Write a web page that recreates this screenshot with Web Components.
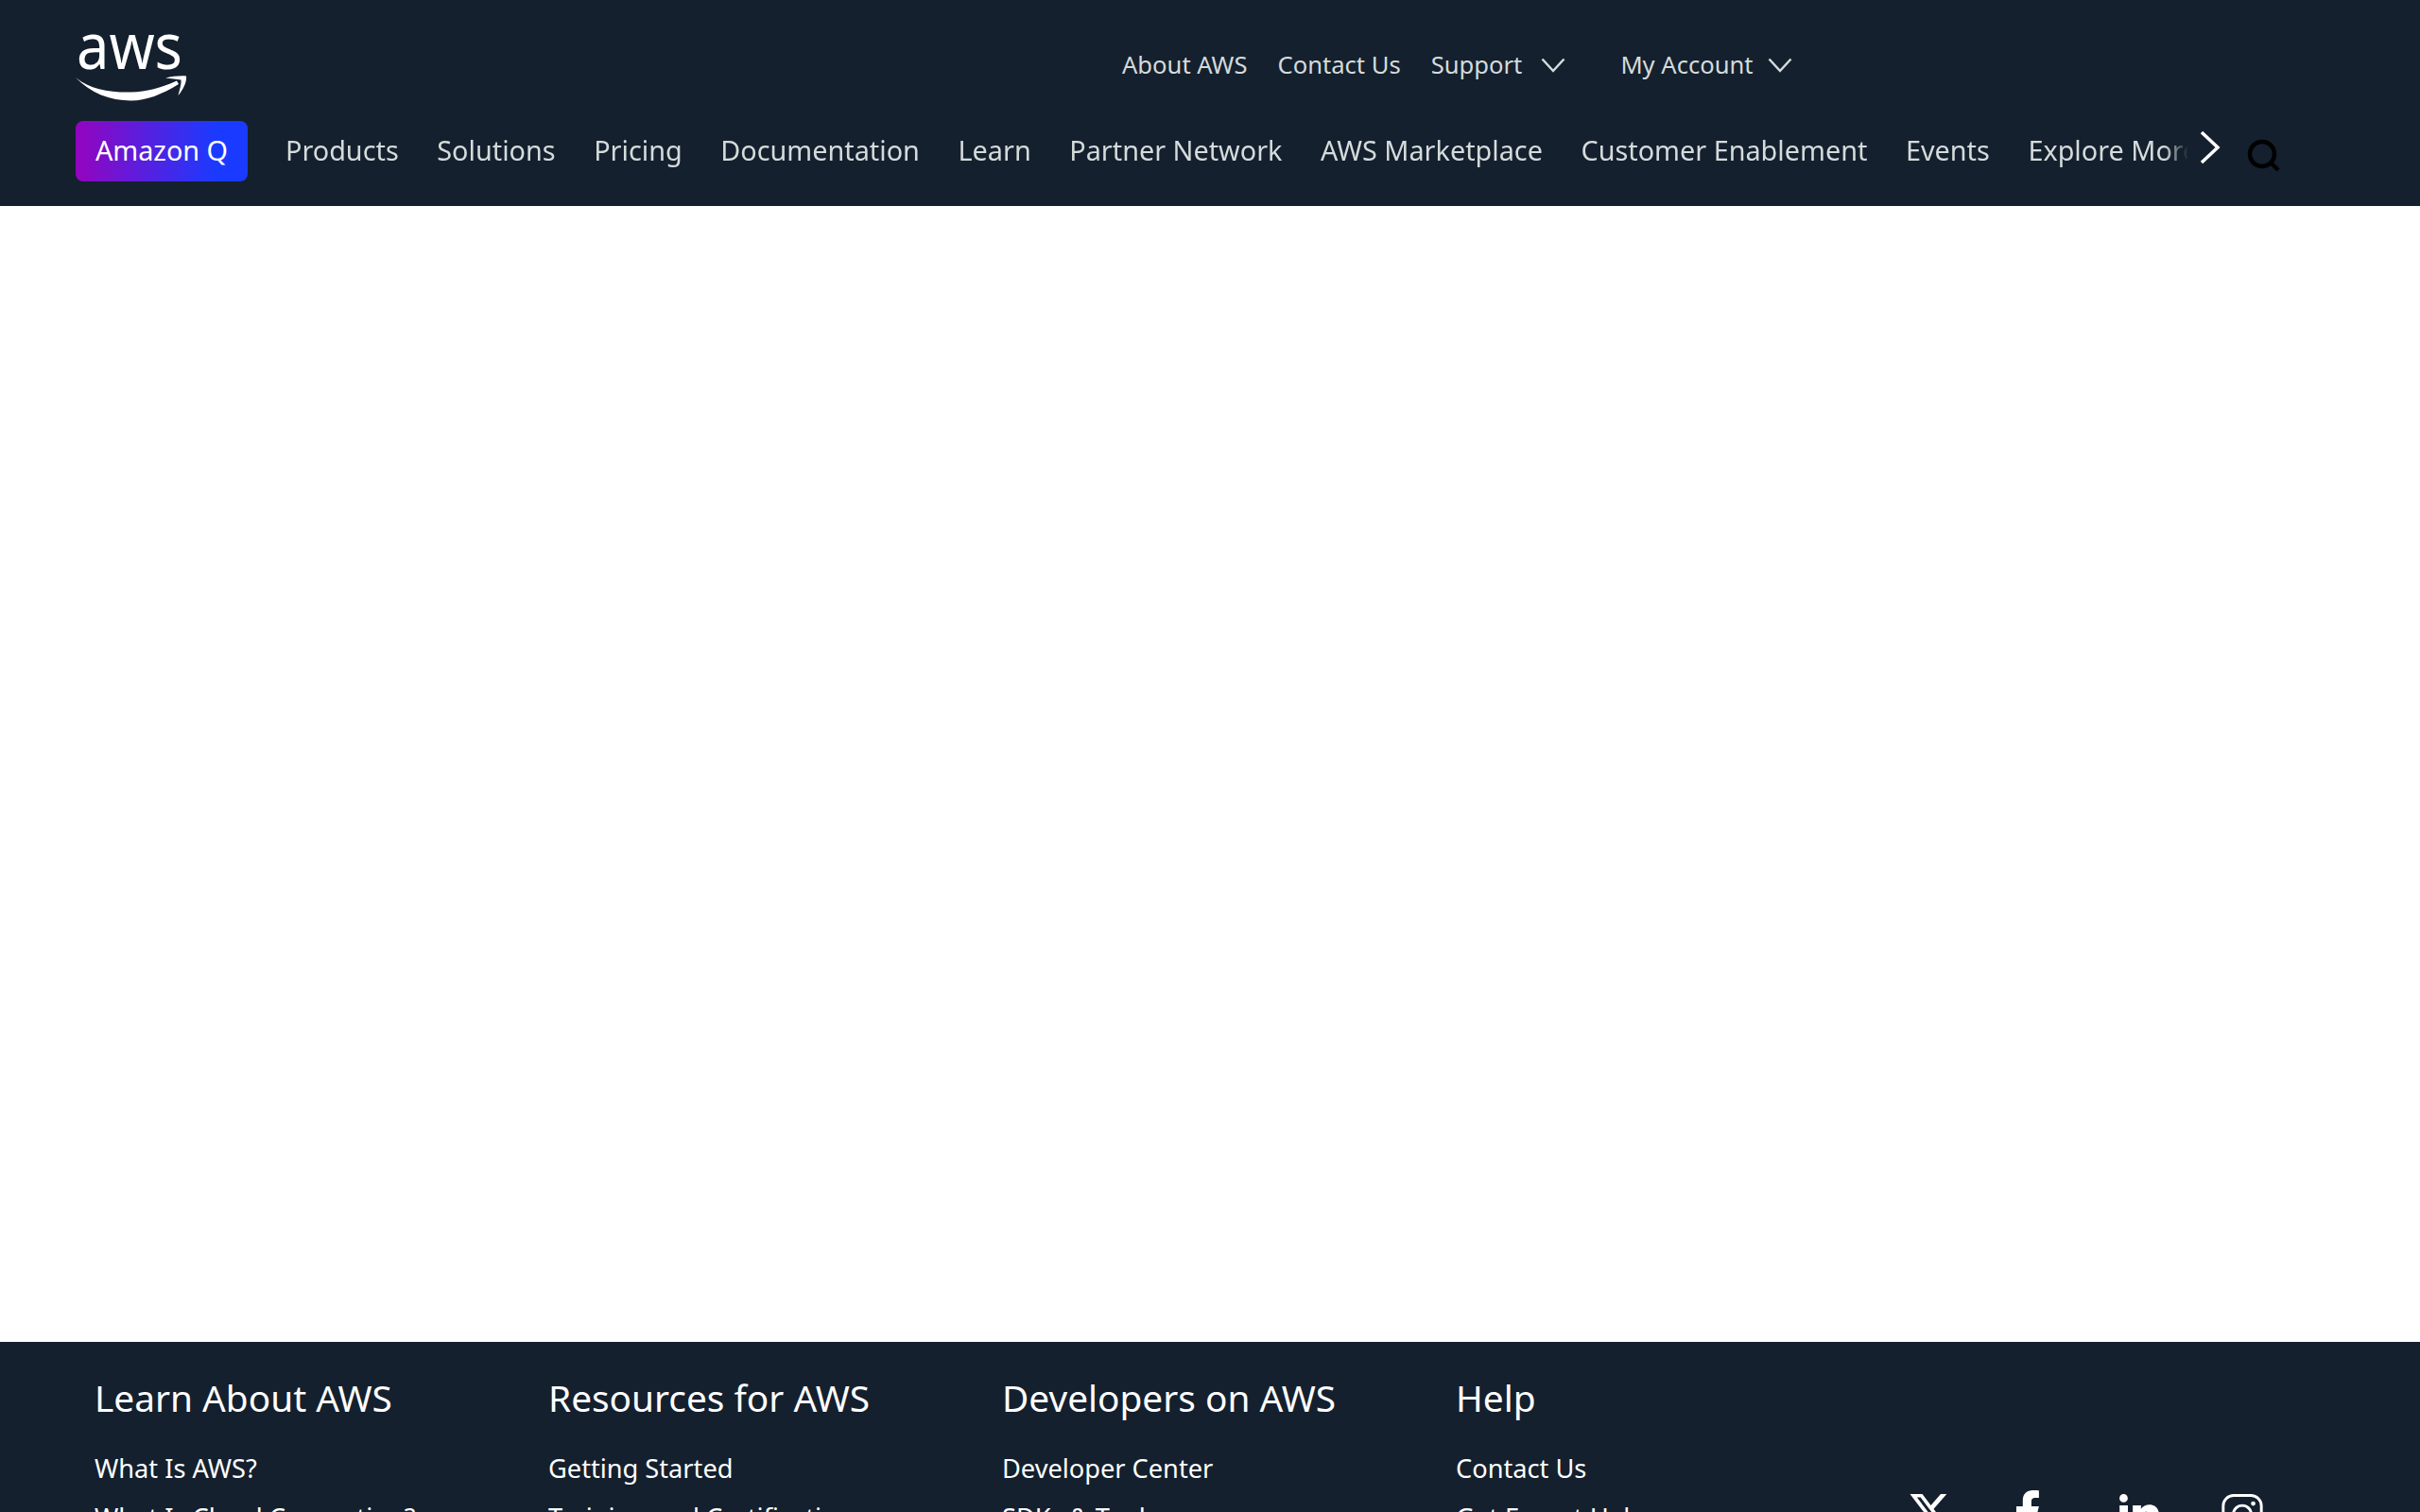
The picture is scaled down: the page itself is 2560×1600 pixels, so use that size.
<!DOCTYPE html>
<html lang="en">
<head>
<meta charset="utf-8">
<title>AWS</title>
<style>
    html, body { margin: 0; height: 100%; overflow: hidden; background: #fff; }
    body { font-family: "Noto Sans", "Liberation Sans", sans-serif; }
</style>
</head>
<body>
<aws-page>
    <aws-header slot="header"></aws-header>
    <aws-footer slot="footer">
        <footer-column heading="Learn About AWS">
            <a>What Is AWS?</a><a>What Is Cloud Computing?</a><a>What Is DevOps?</a>
        </footer-column>
        <footer-column heading="Resources for AWS">
            <a>Getting Started</a><a>Training and Certification</a><a>AWS Trust Center</a>
        </footer-column>
        <footer-column heading="Developers on AWS">
            <a>Developer Center</a><a>SDKs &amp; Tools</a><a>.NET on AWS</a>
        </footer-column>
        <footer-column heading="Help">
            <a>Contact Us</a><a>Get Expert Help</a><a>File a Support Ticket</a>
        </footer-column>
        <social-links></social-links>
    </aws-footer>
</aws-page>

<script>
const INK = '#14202e';

class AwsPage extends HTMLElement {
    constructor() {
        super();
        this.attachShadow({ mode: 'open' });
        this.shadowRoot.innerHTML = `
        <style>
            :host { display: flex; flex-direction: column; width: 2560px; }
            main { height: 1202px; background: #fff; }
        </style>
        <slot name="header"></slot>
        <main></main>
        <slot name="footer"></slot>
        `;
    }
}

class AwsLogo extends HTMLElement {
    constructor() {
        super();
        this.attachShadow({ mode: 'open' });
        this.shadowRoot.innerHTML = `
        <style>
            :host { display: block; width: 118px; height: 72px; }
            svg { display: block; }
            text { font-family: "Noto Sans", sans-serif; font-size: 68px; fill: #fff; }
        </style>
        <svg width="118" height="72" viewBox="0 0 118 72">
            <text x="1" y="37" textLength="112" lengthAdjust="spacingAndGlyphs">aws</text>
            <path fill="#fff" d="M0 46C16 59 36 62 59 61.500C75 61 90 57 107 49.500L109 53C91 64 75 70.500 58.500 70.500C36 70.500 16 62.500 0 46Z"/>
            <path fill="#fff" d="M95 46.500C102 45 110 44 117 44.500C118 51 113 60 108.500 65C110 59 112 53 111.500 48.500C107 47.500 101 47.500 95 46.500Z"/>
        </svg>
        `;
    }
}

class AwsHeader extends HTMLElement {
    constructor() {
        super();
        this.attachShadow({ mode: 'open' });
        const chevron = `<svg class="chev" width="26" height="16" viewBox="0 0 26 16"><path d="M1.500 1.500L13 14L24.500 1.500" fill="none" stroke="#d5dbdb" stroke-width="2.500"/></svg>`;
        const links = ['Products', 'Solutions', 'Pricing', 'Documentation', 'Learn', 'Partner Network',
            'AWS Marketplace', 'Customer Enablement', 'Events', 'Explore More', 'Customer Stories'];
        this.shadowRoot.innerHTML = `
        <style>
            :host {
                display: block;
                height: 218px;
                box-sizing: border-box;
                padding: 36px 0 0 80px;
                background: ${INK};
                color: #d5dbdb;
                font-family: "Noto Sans", "Liberation Sans", sans-serif;
            }
            .top { display: flex; align-items: flex-start; height: 92px; }
            .util {
                display: flex;
                align-items: center;
                margin-left: 989px;
                height: 64px;
                font-size: 25.600px;
                white-space: nowrap;
            }
            .util a { margin-right: 32px; }
            .util a:nth-of-type(4) { margin-right: 27px; }
            .chev { margin-right: 58px; margin-left: -12px; margin-top: 2px; }
            .bar { display: flex; align-items: center; height: 64px; width: 2340px; }
            .q {
                flex: none;
                width: 182px;
                height: 64px;
                line-height: 62px;
                text-align: center;
                border-radius: 8px;
                color: #fff;
                font-size: 28.800px;
                background: linear-gradient(90deg, #9404bf 0%, #1a3bff 82%);
            }
            .scroller {
                flex: none;
                display: flex;
                gap: 40.600px;
                width: 2017px;
                margin-left: 40px;
                margin-top: -3px;
                overflow: hidden;
                font-size: 28.800px;
                white-space: nowrap;
                -webkit-mask-image: linear-gradient(90deg, #000 0, #000 1988px, transparent 2013px);
                mask-image: linear-gradient(90deg, #000 0, #000 1988px, transparent 2013px);
            }
            .next { flex: none; margin-left: 8px; margin-top: -8px; }
            .search { flex: none; margin-left: 28px; margin-top: 9px; }
        </style>
        <div class="top">
            <aws-logo></aws-logo>
            <nav class="util">
                <a>About AWS</a><a>Contact Us</a><a>Support</a>${chevron}<a>My Account</a>${chevron}
            </nav>
        </div>
        <div class="bar">
            <div class="q">Amazon Q</div>
            <nav class="scroller">${links.map((l) => `<a>${l}</a>`).join('')}</nav>
            <svg class="next" width="22" height="36" viewBox="0 0 22 36"><path d="M2 2L19 18L2 34" fill="none" stroke="#fff" stroke-width="3.500"/></svg>
            <svg class="search" width="36" height="36" viewBox="0 0 36 36"><circle cx="16" cy="16" r="13" fill="none" stroke="#000" stroke-width="4.500"/><path d="M25 25L33 33" stroke="#000" stroke-width="4.500"/></svg>
        </div>
        `;
    }
}

class AwsFooter extends HTMLElement {
    constructor() {
        super();
        this.attachShadow({ mode: 'open' });
        this.shadowRoot.innerHTML = `
        <style>
            :host {
                display: block;
                box-sizing: border-box;
                padding: 31px 0 64px 100px;
                background: ${INK};
                color: #fff;
                font-family: "Noto Sans", "Liberation Sans", sans-serif;
            }
            .cols { display: grid; grid-template-columns: repeat(4, 480px) 440px; }
        </style>
        <div class="cols"><slot></slot></div>
        `;
    }
}

class FooterColumn extends HTMLElement {
    constructor() {
        super();
        this.attachShadow({ mode: 'open' });
        this.shadowRoot.innerHTML = `
        <style>
            :host { display: block; }
            h2 { margin: 0 0 21px; font-size: 38.800px; line-height: 56px; font-weight: 400; }
            .links { display: flex; flex-direction: column; font-size: 27.200px; line-height: 52px; }
            ::slotted(a) { display: block; }
        </style>
        <h2></h2>
        <div class="links"><slot></slot></div>
        `;
    }

    connectedCallback() {
        this.shadowRoot.querySelector('h2').textContent = this.getAttribute('heading');
    }
}

class SocialLinks extends HTMLElement {
    constructor() {
        super();
        this.attachShadow({ mode: 'open' });
        this.shadowRoot.innerHTML = `
        <style>
            :host { display: flex; align-items: flex-start; gap: 66px; padding-top: 130px; }
            svg { display: block; flex: none; width: 44px; height: 44px; fill: #fff; }
            .f { margin-top: -4px; }
        </style>
        <svg viewBox="1 2.250 23 23"><path d="M18.244 2.250h3.308l-7.227 8.260 8.502 11.240H16.170l-5.214-6.817L4.990 21.750H1.680l7.730-8.835L1.254 2.250H8.080l4.713 6.231zm-1.161 17.520h1.833L7.084 4.126H5.117z"/></svg>
        <svg class="f" viewBox="5.700 2 19.300 19.300"><path d="M14 13.500h2.500l1-4H14v-2c0-1.030 0-2 2-2h1.500V2.140c-.326-.043-1.557-.14-2.857-.14C11.928 2 10 3.657 10 6.700v2.800H7v4h3V22h4z"/></svg>
        <svg viewBox="2 3 20 20"><path d="M6.940 5a2 2 0 1 1-4-.002 2 2 0 0 1 4 .002zM7 8.480H3V21h4zm6.320 0H9.340V21h3.940v-6.570c0-3.660 4.770-4 4.770 0V21H22v-7.930c0-6.170-7.060-5.940-8.720-2.910z"/></svg>
        <svg viewBox="0 0.200 24 24" style="fill:none;stroke:#fff;stroke-width:1.600"><rect x="1" y="1" width="22" height="22" rx="6"/><circle cx="12" cy="12" r="5.200"/><circle cx="18.300" cy="5.700" r="1.300" fill="#fff" stroke="none"/></svg>
        `;
    }
}

customElements.define('aws-page', AwsPage);
customElements.define('aws-logo', AwsLogo);
customElements.define('aws-header', AwsHeader);
customElements.define('aws-footer', AwsFooter);
customElements.define('footer-column', FooterColumn);
customElements.define('social-links', SocialLinks);
</script>
</body>
</html>
